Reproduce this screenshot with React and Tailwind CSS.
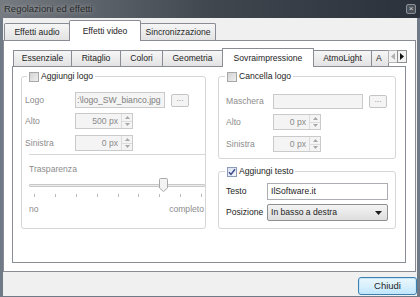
import React from 'react';

const Check = ({ checked }) => (
    <span className={checked
        ? 'w-[10px] h-[10px] border border-[#8e9bb8] bg-linear-to-br from-[#d9e2f1] to-[#f4f7fb] flex items-center justify-center'
        : 'w-[10px] h-[10px] border border-[#a7a7a7] bg-linear-to-br from-[#d3d3d3] to-[#efefef]'}>
        {checked && (
            <svg width="8" height="8" viewBox="0 0 8 8">
                <path d="M1 4.2 L3 6.4 L7 1.2" fill="none" stroke="#3d4c8c" strokeWidth="1.5" />
            </svg>
        )}
    </span>
);

const Spin = ({ value, w }) => (
    <div className={`${w} h-[16px] border border-[#cacaca] bg-[#f4f4f4] flex items-stretch`}>
        <div className="flex-1 flex items-center justify-end pr-[3px] text-[#8a8a8a]">{value}</div>
        <div className="w-[11px] flex flex-col border-l border-[#dcdcdc]">
            <div className="flex-1 flex items-center justify-center border-b border-[#dcdcdc]">
                <svg width="5" height="3" viewBox="0 0 5 3"><path d="M0 3 L2.5 0 L5 3Z" fill="#a8a8a8" /></svg>
            </div>
            <div className="flex-1 flex items-center justify-center">
                <svg width="5" height="3" viewBox="0 0 5 3"><path d="M0 0 L2.5 3 L5 0Z" fill="#a8a8a8" /></svg>
            </div>
        </div>
    </div>
);

const Dots = () => (
    <div className="ml-[6px] w-[18px] h-[13px] border border-[#c4c4c4] rounded-[2px] bg-[#f4f4f4] flex items-center justify-center text-[#9a9a9a] leading-none pb-[3px]">...</div>
);

const App = () => {
    const ticks = [0, 1, 2, 3, 4, 5, 6, 7, 8];

    return (
        <div className="w-[420px] h-[297px] bg-[#6f7a86] flex flex-col overflow-hidden font-['Liberation_Sans',Arial,sans-serif] text-[8.6px] text-[#1e1e1e]">
            {/* title bar */}
            <div className="h-[18px] flex items-center justify-between bg-linear-to-r from-[#767b81] via-[#40474f] to-[#2a313a] pl-[4px] pr-[4px]">
                <span className="text-[9.5px] text-[#2a2a2a] [text-shadow:0_0_4px_#b4b8bc]">Regolazioni ed effetti</span>
                <span className="w-[10px] h-[10px] border border-[#8a8f96] rounded-[2px] bg-[#4b525a] flex items-center justify-center text-[#d8d8d8] text-[8px] leading-none">×</span>
            </div>

            <div className="flex-1 mx-[3px] mb-px bg-[#f0f0f0] flex flex-col">
                {/* outer tabs */}
                <div className="h-[22px] flex items-end pl-[1px]">
                    <div className="w-[66px] h-[17px] border border-b-0 border-[#898c95] rounded-t-[2px] bg-linear-to-b from-[#f6f6f6] to-[#e3e3e3] flex items-center justify-center">Effetti audio</div>
                    <div className="relative z-10 -ml-px -mb-px w-[72px] h-[21px] border border-b-0 border-[#898c95] rounded-t-[2px] bg-white flex items-center justify-center">Effetti video</div>
                    <div className="-ml-px w-[76px] h-[17px] border border-b-0 border-[#898c95] rounded-t-[2px] bg-linear-to-b from-[#f6f6f6] to-[#e3e3e3] flex items-center justify-center">Sincronizzazione</div>
                </div>

                {/* outer panel */}
                <div className="h-[232px] mr-px border border-[#898c95] bg-white flex flex-col">
                    {/* inner tabs */}
                    <div className="mt-[7px] h-[18px] flex items-end pl-[9px]">
                        <div className="w-[59px] h-[16px] border border-b-0 border-[#898c95] bg-linear-to-b from-[#f6f6f6] to-[#e3e3e3] flex items-center justify-center">Essenziale</div>
                        <div className="-ml-px w-[50px] h-[16px] border border-b-0 border-[#898c95] bg-linear-to-b from-[#f6f6f6] to-[#e3e3e3] flex items-center justify-center">Ritaglio</div>
                        <div className="-ml-px w-[43px] h-[16px] border border-b-0 border-[#898c95] bg-linear-to-b from-[#f6f6f6] to-[#e3e3e3] flex items-center justify-center">Colori</div>
                        <div className="-ml-px w-[61px] h-[16px] border border-b-0 border-[#898c95] bg-linear-to-b from-[#f6f6f6] to-[#e3e3e3] flex items-center justify-center">Geometria</div>
                        <div className="relative z-10 -ml-px -mb-px w-[92px] h-[19px] border border-b-0 border-[#898c95] bg-white flex items-center justify-center">Sovraimpressione</div>
                        <div className="-ml-px w-[59px] h-[16px] border border-b-0 border-[#898c95] bg-linear-to-b from-[#f6f6f6] to-[#e3e3e3] flex items-center justify-center">AtmoLight</div>
                        <div className="-ml-px w-[18px] h-[16px] border border-b-0 border-[#898c95] bg-linear-to-b from-[#f6f6f6] to-[#e3e3e3] flex items-center pl-[4px] overflow-hidden">A</div>
                        <div className="self-start mt-[2px] -ml-px flex">
                            <div className="w-[10px] h-[13px] border border-[#b5b5b5] bg-[#f2f2f2] flex items-center justify-center">
                                <svg width="4" height="7" viewBox="0 0 4 7"><path d="M4 0 L0 3.5 L4 7Z" fill="#b0b0b0" /></svg>
                            </div>
                            <div className="-ml-px w-[10px] h-[13px] border border-[#8f8f8f] bg-[#f2f2f2] flex items-center justify-center">
                                <svg width="4" height="7" viewBox="0 0 4 7"><path d="M0 0 L4 3.5 L0 7Z" fill="#111" /></svg>
                            </div>
                        </div>
                    </div>

                    {/* inner panel */}
                    <div className="ml-[8px] w-[394px] h-[197px] border border-[#898c95] bg-white flex pl-[8px] pt-[4px] gap-[12px]">
                        {/* left group */}
                        <fieldset className="w-[185px] h-[158px] border border-[#d6d6d6] rounded-[3px]">
                            <legend className="ml-[5px] px-[2px]">
                                <span className="flex items-center gap-[2px] h-[11px]"><Check />Aggiungi logo</span>
                            </legend>
                            <div className="flex flex-col text-[#8d8d8d]">
                                <div className="mt-[10px] h-[16px] flex items-center">
                                    <span className="w-[53px] pl-[3px]">Logo</span>
                                    <div className="w-[90px] h-[16px] border border-[#cacaca] bg-[#f4f4f4] flex items-center overflow-hidden whitespace-nowrap pl-[1px] text-[#7e7e7e]">:\logo_SW_bianco.jpg</div>
                                    <Dots />
                                </div>
                                <div className="mt-[5px] h-[16px] flex items-center">
                                    <span className="w-[53px] pl-[3px]">Alto</span>
                                    <Spin value="500 px" w="w-[58px]" />
                                </div>
                                <div className="mt-[6px] h-[16px] flex items-center">
                                    <span className="w-[53px] pl-[3px]">Sinistra</span>
                                    <Spin value="0 px" w="w-[58px]" />
                                </div>
                                <div className="mt-[3px] ml-[7px] h-px bg-[#d6d6d6]" />
                                <div className="mt-[9px] pl-[7px] leading-[11px]">Trasparenza</div>
                                <div className="relative mt-[3px] ml-[7px] h-[14px] flex items-center">
                                    <div className="w-full h-[3px] border border-[#c8c8c8] bg-[#ececec] rounded-[1px]" />
                                    <svg className="absolute left-[130px] top-0" width="9" height="14" viewBox="0 0 9 14">
                                        <path d="M0.5 1.5 Q0.5 0.5 1.5 0.5 L7.5 0.5 Q8.5 0.5 8.5 1.5 L8.5 10 L4.5 13.5 L0.5 10Z" fill="#f3f3f3" stroke="#a9a9a9" />
                                    </svg>
                                </div>
                                <div className="mt-[2px] ml-[12px] w-[168px] h-[3px] flex justify-between">
                                    {ticks.map(t => <span key={t} className="w-px h-[3px] bg-[#b9b9b9]" />)}
                                </div>
                                <div className="mt-[7px] pl-[7px] pr-[1px] leading-[11px] flex justify-between">
                                    <span>no</span>
                                    <span>completo</span>
                                </div>
                            </div>
                        </fieldset>

                        {/* right groups */}
                        <div className="w-[178px] flex flex-col">
                            <fieldset className="h-[88px] border border-[#d6d6d6] rounded-[3px]">
                                <legend className="ml-[6px] px-[2px]">
                                    <span className="flex items-center gap-[2px] h-[11px]"><Check />Cancella logo</span>
                                </legend>
                                <div className="flex flex-col text-[#8d8d8d]">
                                    <div className="mt-[11px] h-[16px] flex items-center">
                                        <span className="w-[54px] pl-[7px]">Maschera</span>
                                        <div className="w-[90px] h-[15px] border border-[#cacaca] bg-[#f4f4f4]" />
                                        <Dots />
                                    </div>
                                    <div className="mt-[5px] h-[16px] flex items-center">
                                        <span className="w-[54px] pl-[7px]">Alto</span>
                                        <Spin value="0 px" w="w-[48px]" />
                                    </div>
                                    <div className="mt-[6px] h-[16px] flex items-center">
                                        <span className="w-[54px] pl-[7px]">Sinistra</span>
                                        <Spin value="0 px" w="w-[48px]" />
                                    </div>
                                </div>
                            </fieldset>
                            <fieldset className="mt-[7px] h-[63px] border border-[#d6d6d6] rounded-[3px]">
                                <legend className="ml-[6px] px-[2px]">
                                    <span className="flex items-center gap-[2px] h-[11px]"><Check checked />Aggiungi testo</span>
                                </legend>
                                <div className="flex flex-col">
                                    <div className="mt-[6px] h-[17px] flex items-center">
                                        <span className="w-[48px] pl-[7px]">Testo</span>
                                        <div className="w-[121px] h-[17px] border border-[#abadb3] bg-white flex items-center pl-[3px]">IlSoftware.it</div>
                                    </div>
                                    <div className="mt-[4px] h-[17px] flex items-center">
                                        <span className="w-[48px] pl-[7px]">Posizione</span>
                                        <div className="w-[121px] h-[17px] border border-[#8e8f8f] rounded-[2px] bg-linear-to-b from-[#f4f4f4] to-[#dedede] flex items-center justify-between pl-[3px] pr-[5px]">
                                            <span>In basso a destra</span>
                                            <svg width="7" height="4" viewBox="0 0 7 4"><path d="M0 0 L7 0 L3.5 4Z" fill="#1e1e1e" /></svg>
                                        </div>
                                    </div>
                                </div>
                            </fieldset>
                        </div>
                    </div>
                </div>

                {/* footer */}
                <div className="flex-1 flex justify-end items-start pt-[5px]">
                    <div className="w-[59px] h-[18px] border border-[#3c7fb1] rounded-[3px] bg-linear-to-b from-[#eaf6fd] via-[#d9f0fc] to-[#bee6fd] shadow-[inset_0_0_0_1px_#c5e6f8] flex items-center justify-center text-[9.5px]">Chiudi</div>
                </div>
            </div>
        </div>
    );
}

export default App;
